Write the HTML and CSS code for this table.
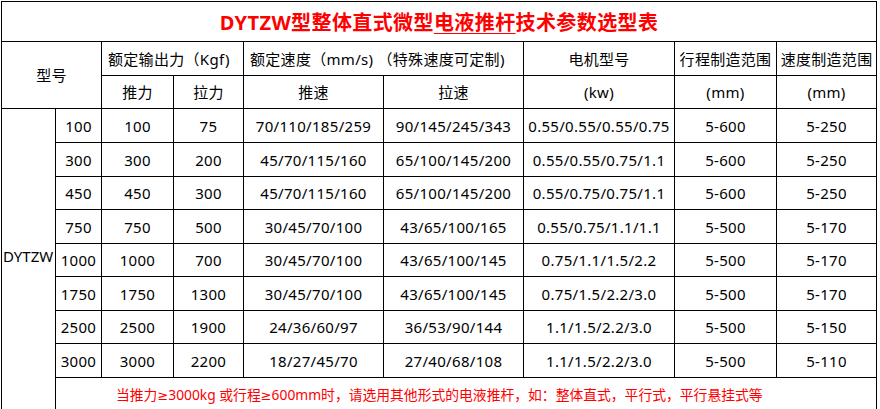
FILE: index.html
```html
<!DOCTYPE html>
<html lang="zh-CN">
<head>
<meta charset="utf-8">
<title>DYTZW型整体直式微型电液推杆技术参数选型表</title>
<link rel="stylesheet" href="styles.css">
</head>
<body>
<table class="spec">
  <colgroup>
    <col class="c1"><col class="c2"><col class="c3"><col class="c4"><col class="c5"><col class="c6"><col class="c7"><col class="c8"><col class="c9">
  </colgroup>
  <tr class="r-title">
    <td colspan="9" class="title">DYTZW型整体直式微型<span class="ul">电液推杆</span>技术参数选型表</td>
  </tr>
  <tr class="r-h1">
    <td colspan="2" rowspan="2">型号</td>
    <td colspan="2" class="left">额定输出力（Kgf)</td>
    <td colspan="2" class="left">额定速度（mm/s) （特殊速度可定制)</td>
    <td>电机型号</td>
    <td>行程制造范围</td>
    <td>速度制造范围</td>
  </tr>
  <tr class="r-h2">
    <td>推力</td><td>拉力</td><td>推速</td><td>拉速</td><td>(kw)</td><td>(mm)</td><td>(mm)</td>
  </tr>
  <tr class="r-a">
    <td rowspan="9" class="series">DYTZW</td>
    <td>100</td><td>100</td><td>75</td><td>70/110/185/259</td><td>90/145/245/343</td><td>0.55/0.55/0.55/0.75</td><td>5-600</td><td>5-250</td>
  </tr>
  <tr class="r-a">
    <td>300</td><td>300</td><td>200</td><td>45/70/115/160</td><td>65/100/145/200</td><td>0.55/0.55/0.75/1.1</td><td>5-600</td><td>5-250</td>
  </tr>
  <tr class="r-b">
    <td>450</td><td>450</td><td>300</td><td>45/70/115/160</td><td>65/100/145/200</td><td>0.55/0.75/0.75/1.1</td><td>5-600</td><td>5-250</td>
  </tr>
  <tr class="r-a">
    <td>750</td><td>750</td><td>500</td><td>30/45/70/100</td><td>43/65/100/165</td><td>0.55/0.75/1.1/1.1</td><td>5-500</td><td>5-170</td>
  </tr>
  <tr class="r-b">
    <td>1000</td><td>1000</td><td>700</td><td>30/45/70/100</td><td>43/65/100/145</td><td>0.75/1.1/1.5/2.2</td><td>5-500</td><td>5-170</td>
  </tr>
  <tr class="r-a">
    <td>1750</td><td>1750</td><td>1300</td><td>30/45/70/100</td><td>43/65/100/145</td><td>0.75/1.5/2.2/3.0</td><td>5-500</td><td>5-170</td>
  </tr>
  <tr class="r-b">
    <td>2500</td><td>2500</td><td>1900</td><td>24/36/60/97</td><td>36/53/90/144</td><td>1.1/1.5/2.2/3.0</td><td>5-500</td><td>5-150</td>
  </tr>
  <tr class="r-a">
    <td>3000</td><td>3000</td><td>2200</td><td>18/27/45/70</td><td>27/40/68/108</td><td>1.1/1.5/2.2/3.0</td><td>5-500</td><td>5-110</td>
  </tr>
  <tr class="r-note">
    <td colspan="8" class="note">当推力<span class="ge">≥</span>3000kg 或行程<span class="ge">≥</span>600mm时，请选用其他形式的电液推杆，如：整体直式，平行式，平行悬挂式等</td>
  </tr>
</table>
</body>
</html>
```

FILE: styles.css
```css
html, body {
  margin: 0;
  padding: 0;
  background: #ffffff;
}

body {
  font-family: "Noto Sans", "Noto Sans CJK SC", sans-serif;
  color: #000000;
}

.spec {
  margin: 1px 0 0 1px;
  border-collapse: collapse;
  table-layout: fixed;
  width: 875px;
}

.c1 { width: 54px; }
.c2 { width: 46px; }
.c3 { width: 72px; }
.c4 { width: 70px; }
.c5 { width: 140px; }
.c6 { width: 140px; }
.c7 { width: 151px; }
.c8 { width: 102px; }
.c9 { width: 100px; }

.spec td {
  border: 1px solid #000000;
  padding: 0;
  text-align: center;
  vertical-align: middle;
  font-size: 15px;
  letter-spacing: 0.3px;
  line-height: 18px;
  white-space: nowrap;
  overflow: hidden;
}

.r-title { height: 40px; }
.r-h1 { height: 34px; }
.r-h2 { height: 33px; }
.r-a { height: 34px; }
.r-b { height: 33px; }
.r-note { height: 40px; }

.spec td.title {
  color: #ff0000;
  font-size: 20px;
  font-weight: bold;
  letter-spacing: 0.4px;
  padding-top: 2px;
}

.ul {
  text-decoration: underline;
  text-underline-offset: 3px;
  text-decoration-thickness: 1px;
}

.spec td.left {
  text-align: left;
  padding-left: 6px;
}

.spec td.series {
  text-align: left;
  padding: 0 0 15px 1px;
  letter-spacing: 0;
  overflow: visible;
}

.spec td.note {
  color: #ff0000;
  font-size: 13.8px;
  letter-spacing: 0;
  text-align: left;
  padding: 0 0 4px 60px;
}

.ge {
  font-family: "DejaVu Sans", sans-serif;
  font-size: 13px;
}
```
